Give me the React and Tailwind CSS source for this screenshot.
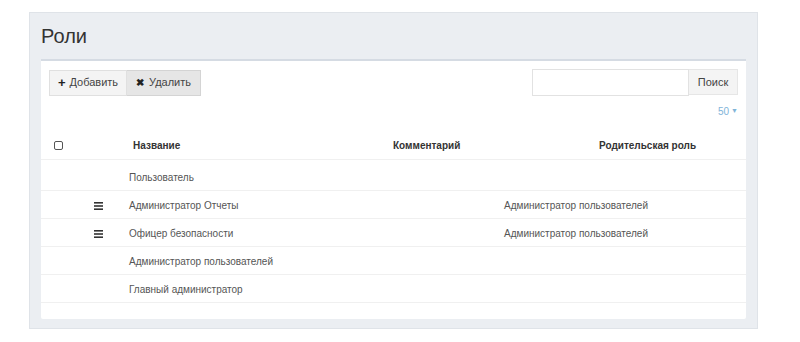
import React from "react";

const rows = [
  { name: "Пользователь", parent: "", icon: false },
  { name: "Администратор Отчеты", parent: "Администратор пользователей", icon: true },
  { name: "Офицер безопасности", parent: "Администратор пользователей", icon: true },
  { name: "Администратор пользователей", parent: "", icon: false },
  { name: "Главный администратор", parent: "", icon: false },
];

function Bars() {
  return (
    <svg width="9" height="8" viewBox="0 0 9 8" className="block">
      <rect x="0" y="0" width="9" height="1.6" fill="#333" />
      <rect x="0" y="3.2" width="9" height="1.6" fill="#333" />
      <rect x="0" y="6.4" width="9" height="1.6" fill="#333" />
    </svg>
  );
}

export default function App() {
  return (
    <div
      className="w-[800px] h-[342px] bg-white pt-[12px] pl-[29px]"
      style={{ fontFamily: '"Liberation Sans", Arial, sans-serif' }}
    >
      <div className="w-[729px] h-[317px] bg-[#ebeef2] border border-[#dfe3e8] flex flex-col">
        <div className="h-[46px] pl-[11px] flex items-center">
          <span className="text-[20px] leading-none text-[#333]">Роли</span>
        </div>
        <div className="mx-[11px] flex-1 mb-[9px] bg-white border-t-2 border-[#d5dbe3] rounded-b-[2px] flex flex-col">
          <div className="flex justify-between items-center px-[8px] pt-[8px]">
            <div className="flex">
              <div className="h-[26px] w-[78px] flex items-center justify-center gap-[4px] bg-[#f4f4f4] border border-[#e0e0e0] text-[11px] text-[#444]">
                <span className="text-[13px] font-bold text-[#222] leading-none">+</span>
                <span>Добавить</span>
              </div>
              <div className="h-[26px] w-[74px] flex items-center justify-center gap-[5px] bg-[#e6e6e6] border border-[#d4d4d4] border-l-0 text-[11px] text-[#444]">
                <span className="text-[10px] font-bold text-[#222] leading-none">✖</span>
                <span>Удалить</span>
              </div>
            </div>
            <div className="flex">
              <div className="h-[27px] w-[157px] bg-white border border-[#e2e2e2]" />
              <div className="h-[26px] w-[49px] flex items-center justify-center bg-[#f4f4f4] border border-[#e6e6e6] border-l-0 text-[11px] text-[#444]">
                Поиск
              </div>
            </div>
          </div>
          <div className="flex justify-end pr-[8px] h-[16px] mt-[7px] items-center text-[10px] text-[#7fb4d8]">
            <span>50</span>
            <span className="ml-[2px] text-[7px]">▼</span>
          </div>
          <div className="mt-[13px]">
            <div className="flex items-center h-[28px] border-b border-[#f0f0f0] text-[10px] font-bold text-[#333]">
              <div className="w-[88px] pl-[13px] flex items-center">
                <div className="w-[9px] h-[9px] border border-[#555] rounded-[2px]" />
              </div>
              <div className="w-[264px] pl-[4px]">Название</div>
              <div className="w-[111px]">Комментарий</div>
              <div className="pl-[95px]">Родительская роль</div>
            </div>
            {rows.map((r, i) => (
              <div
                key={i}
                className={
                  i === 0
                    ? "flex items-center h-[31px] pt-[4px] border-b border-[#f0f0f0] text-[10px] text-[#555]"
                    : "flex items-center h-[28px] pt-[2px] border-b border-[#f0f0f0] text-[10px] text-[#555]"
                }
              >
                <div className="w-[88px] pl-[53px] flex items-center">{r.icon ? <Bars /> : null}</div>
                <div className="w-[264px]">{r.name}</div>
                <div className="w-[111px]"></div>
                <div>{r.parent}</div>
              </div>
            ))}
          </div>
        </div>
      </div>
    </div>
  );
}
